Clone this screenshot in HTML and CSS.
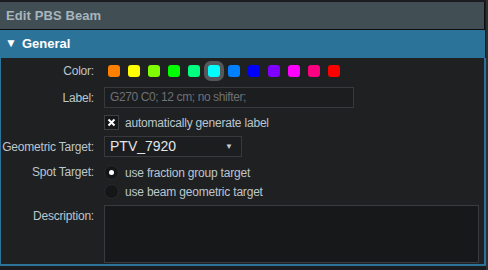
FILE: index.html
```html
<!DOCTYPE html>
<html lang="en">
<head>
  <meta charset="UTF-8" />
  <title>Edit PBS Beam</title>
  <link rel="stylesheet" href="styles.css">
</head>
<body>
  <div class="window">
    <div class="title-bar">Edit PBS Beam</div>
    <div class="section-head"><span class="caret">&#9660;</span>General</div>
    <div class="section-body">
      <div class="form">
        <div class="lbl">Color:</div>
        <div class="swatches">
          <span class="swatch" style="background:#ff7f00"></span>
          <span class="swatch" style="background:#ffff00"></span>
          <span class="swatch" style="background:#80ff00"></span>
          <span class="swatch" style="background:#00ff00"></span>
          <span class="swatch" style="background:#00ff80"></span>
          <span class="swatch selected" style="background:#00ffff"></span>
          <span class="swatch" style="background:#0080ff"></span>
          <span class="swatch" style="background:#0000ff"></span>
          <span class="swatch" style="background:#8000ff"></span>
          <span class="swatch" style="background:#ff00ff"></span>
          <span class="swatch" style="background:#ff0080"></span>
          <span class="swatch" style="background:#ff0000"></span>
        </div>

        <div class="lbl">Label:</div>
        <div class="field text-input placeholder">G270 C0; 12 cm; no shifter;</div>

        <div class="lbl"></div>
        <div class="check-row">
          <span class="checkbox">
            <svg width="9" height="9" viewBox="0 0 9 9"><path d="M1.5 1.5 L7.5 7.5 M7.5 1.5 L1.5 7.5" stroke="#fff" stroke-width="2"/></svg>
          </span>
          automatically generate label
        </div>

        <div class="lbl">Geometric Target:</div>
        <div class="field select">PTV_7920<span class="arrow">&#9660;</span></div>

        <div class="lbl spot">Spot Target:</div>
        <div class="radios">
          <div class="radio-row"><span class="radio checked"></span>use fraction group target</div>
          <div class="radio-row"><span class="radio"></span>use beam geometric target</div>
        </div>

        <div class="lbl top">Description:</div>
        <div class="textarea"></div>
      </div>
    </div>
  </div>
  <div class="scroll"></div>
</body>
</html>
```

FILE: styles.css
```css
body {
  margin: 0;
  background: #1b1c1f;
  font-family: "Liberation Sans", Arial, sans-serif;
  font-size: 12px;
  letter-spacing: -0.2px;
  display: flex;
  height: 270px;
  overflow: hidden;
}

.window {
  width: 486px;
  padding-top: 2px;
}

.scroll {
  width: 2px;
  background: #2e2f32;
}

.title-bar {
  height: 28px;
  line-height: 28px;
  background: #414f55;
  border-bottom: 1px solid #0e0f10;
  border-right: 1px solid #0e0f10;
  padding-left: 6px;
  box-sizing: border-box;
  width: 485px;
  color: #a8b5bc;
  font-size: 13px;
  font-weight: bold;
  letter-spacing: 0.1px;
}

.section-head {
  height: 28px;
  line-height: 28px;
  background: #2c7399;
  width: 485px;
  color: #ffffff;
  font-size: 13px;
  font-weight: bold;
  letter-spacing: 0;
  padding-left: 5px;
  box-sizing: border-box;
}

.caret {
  font-size: 12px;
  margin-right: 5px;
  position: relative;
  top: -1px;
}

.section-body {
  width: 486px;
  box-sizing: border-box;
  background: #1f2022;
  border: 2px solid #2c7399;
  border-top: none;
  border-left-width: 1px;
  padding: 3px 4px 3px 0;
  height: 208px;
}

.form {
  display: grid;
  grid-template-columns: 93px 1fr;
  column-gap: 10px;
  row-gap: 6px;
  color: #bcc6cd;
  align-items: center;
}

.lbl {
  text-align: right;
  white-space: nowrap;
  display: flex;
  justify-content: flex-end;
}

.lbl.top {
  align-self: start;
  padding-top: 4px;
}

.lbl.spot {
  align-self: start;
  padding-top: 2px;
}

.swatches {
  display: flex;
  height: 20px;
  align-items: center;
}

.swatch {
  width: 12px;
  height: 12px;
  border-radius: 3px;
  margin: 0 4px;
}

.swatch.selected {
  box-shadow: 0 0 0 4px #55575a;
}

.field {
  height: 21px;
  box-sizing: border-box;
  border: 1px solid #38393c;
  background: #1c1d1f;
  line-height: 19px;
  padding-left: 5px;
}

.text-input {
  width: 250px;
  letter-spacing: -0.4px;
}

.placeholder {
  color: #6d7175;
}

.check-row {
  display: flex;
  align-items: center;
  height: 15px;
  gap: 6px;
  margin-top: 1px;
}

.checkbox {
  width: 15px;
  height: 15px;
  box-sizing: border-box;
  border: 1px solid #3f4043;
  background: #151618;
  display: flex;
  align-items: center;
  justify-content: center;
}

.select {
  width: 138px;
  color: #e2e6e9;
  display: flex;
  justify-content: space-between;
  padding-right: 8px;
  font-size: 14px;
  letter-spacing: 0;
}

.arrow {
  font-size: 8px;
  color: #c8ccd0;
}

.radios {
  display: flex;
  flex-direction: column;
  gap: 4px;
  padding-top: 2px;
}

.radio-row {
  display: flex;
  align-items: center;
  gap: 6px;
  height: 15px;
}

.radio {
  width: 15px;
  height: 15px;
  border-radius: 50%;
  box-sizing: border-box;
  border: 1px solid #2a2b2e;
  background: #151618;
  display: flex;
  align-items: center;
  justify-content: center;
}

.radio.checked::after {
  content: "";
  width: 5px;
  height: 5px;
  border-radius: 50%;
  background: #ffffff;
}

.textarea {
  height: 58px;
  box-sizing: border-box;
  border: 1px solid #3a3b3e;
  background: #17181a;
  margin-right: 1px;
}
```
